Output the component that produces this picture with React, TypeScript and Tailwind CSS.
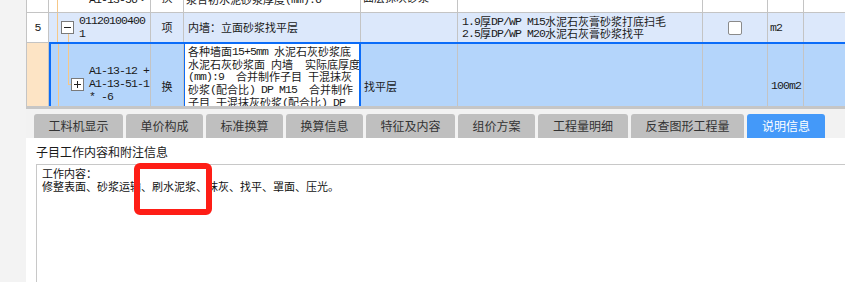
import React from 'react';

// ascii runs get a narrow mono face so they sit at about half the CJK width, like SimSun
const M: React.FC<{ t: string }> = ({ t }) => (
  <>
    {t.split(/([\x20-\x7e]+)/).map((s, i) =>
      /^[\x20-\x7e]+$/.test(s) ? (
        <span key={i} className="font-['Liberation_Mono',monospace] text-[11.5px] tracking-[-0.9px] leading-none">
          {s}
        </span>
      ) : (
        <span key={i} className="leading-none">{s}</span>
      )
    )}
  </>
);

const tabs = [
  { label: '工料机显示', w: 'w-[89px]' },
  { label: '单价构成', w: 'w-[77px]' },
  { label: '标准换算', w: 'w-[77px]' },
  { label: '换算信息', w: 'w-[77px]' },
  { label: '特征及内容', w: 'w-[89px]' },
  { label: '组价方案', w: 'w-[77px]' },
  { label: '工程量明细', w: 'w-[90px]' },
  { label: '反查图形工程量', w: 'w-[113px]' },
  { label: '说明信息', w: 'w-[78px]', active: true },
];

const activeLines = [
  '各种墙面15+5mm 水泥石灰砂浆底',
  '水泥石灰砂浆面 内墙  实际底厚度',
  '(mm):9  合并制作子目 干混抹灰',
  '砂浆(配合比) DP M15  合并制作',
  '子目 干混抹灰砂浆(配合比) DP',
  'M20',
];

const cell = 'shrink-0 border-r border-[#c4c4c4]';
const line = 'h-[13px] flex items-center whitespace-pre';

const App: React.FC = () => {
  return (
    <div className="relative w-[845px] h-[282px] overflow-hidden flex bg-white font-['Noto_Sans_CJK_SC',sans-serif] text-[11px] text-[#1a1a1a]">
      <div className="w-[26px] shrink-0 bg-[#f3f3f3]" />

      <div className="flex-1 flex flex-col min-w-0">
        {/* grid */}
        <div className="h-[106px] overflow-hidden border-l border-[#c4c4c4] flex flex-col">
          {/* partial row above */}
          <div className="h-[13px] shrink-0 flex border-b border-[#c4c4c4] bg-white">
            <div className={`${cell} w-[22px]`} />
            <div className={`${cell} w-[102px] relative flex items-end pb-[6px] pl-[40px] overflow-hidden`}>
              <div className="absolute left-[8px] top-0 bottom-0 w-px bg-[#f6c888]" />
              <div className={line}><M t="A1-13-56···" /></div>
            </div>
            <div className={`${cell} w-[33px] flex items-end justify-center pb-[8px] overflow-hidden`}>
              <div className={line}>换</div>
            </div>
            <div className={`${cell} w-[177px] flex items-end pb-[6px] pl-[2px] overflow-hidden`}>
              <div className={line}><M t="浆合初水泥砂浆厚度(mm):6" /></div>
            </div>
            <div className={`${cell} w-[97px] flex items-end pb-[8px] pl-[2px] overflow-hidden`}>
              <div className={line}>面层抹灰砂浆</div>
            </div>
            <div className={`${cell} w-[245px]`} />
            <div className={`${cell} w-[65px]`} />
            <div className={`${cell} w-[36px]`} />
            <div className="flex-1" />
          </div>

          {/* row 5 */}
          <div className="h-[29px] shrink-0 flex">
            <div className={`${cell} w-[22px] bg-white flex items-center justify-center`}>
              <M t="5" />
            </div>
            <div className="flex-1 flex bg-[#dce8fb]">
              <div className={`${cell} w-[102px] relative pl-[30px] pt-[1px] overflow-hidden`}>
                <div className="absolute left-[8px] top-0 bottom-0 w-px bg-[#f6c888]" />
                <div className="absolute left-[19px] top-[21px] bottom-0 w-px bg-[#f6c888]" />
                <div className="absolute left-[12px] top-[8px] w-[13px] h-[13px] border border-[#7a7a7a] bg-white flex items-center justify-center">
                  <div className="w-[7px] h-px bg-[#222]" />
                </div>
                <div className={line}><M t="01120100400" /></div>
                <div className={line}><M t="1" /></div>
              </div>
              <div className={`${cell} w-[33px] flex items-center justify-center`}>项</div>
              <div className={`${cell} w-[177px] flex items-center pl-[4px] whitespace-nowrap`}>内墙：立面砂浆找平层</div>
              <div className={`${cell} w-[97px]`} />
              <div className={`${cell} w-[245px] flex flex-col justify-center pl-[4px] overflow-hidden`}>
                <div className="h-[12px] flex items-center whitespace-pre"><M t="1.9厚DP/WP M15水泥石灰膏砂浆打底扫毛" /></div>
                <div className="h-[12px] flex items-center whitespace-pre"><M t="2.5厚DP/WP M20水泥石灰膏砂浆找平" /></div>
              </div>
              <div className={`${cell} w-[65px] flex items-center justify-center`}>
                <div className="w-[14px] h-[14px] rounded-[2px] border border-[#8a8a8a] bg-white" />
              </div>
              <div className={`${cell} w-[36px] flex items-center pl-[2px]`}>
                <M t="m2" />
              </div>
              <div className="flex-1" />
            </div>
          </div>

          {/* selected row */}
          <div className="h-[82px] shrink-0 flex">
            <div className={`${cell} w-[22px] bg-[#fde4c5] border-t border-t-[#c4c4c4]`} />
            <div className="flex-1 flex border-t-2 border-l-2 border-[#0b6cf8] bg-[#b4d5fb]">
              <div className={`${cell} w-[100px] relative pl-[38px] pt-[20px] overflow-hidden`}>
                <div className="absolute left-[7px] top-0 bottom-0 w-px bg-[#f6c888]" />
                <div className="absolute left-[17px] top-0 h-[41px] w-px bg-[#f6c888]" />
                <div className="absolute left-[17px] top-[40px] w-[4px] h-px bg-[#f6c888]" />
                <div className="absolute left-[20px] top-[34px] w-[13px] h-[13px] border border-[#7a7a7a] bg-white flex items-center justify-center">
                  <div className="w-[7px] h-px bg-[#222]" />
                  <div className="absolute w-px h-[7px] bg-[#222]" />
                </div>
                <div className={line}><M t="A1-13-12 +" /></div>
                <div className={line}><M t="A1-13-51-1" /></div>
                <div className={line}><M t="* -6" /></div>
              </div>
              <div className={`${cell} w-[33px] flex items-center justify-center pt-[4px]`}>换</div>
              <div className="shrink-0 w-[177px] bg-white border-l border-r-2 border-[#0b6cf8] pl-[3px] pt-[1px] overflow-hidden">
                {activeLines.map((l, i) => (
                  <div key={i} className="h-[12.75px] flex items-center whitespace-pre"><M t={l} /></div>
                ))}
              </div>
              <div className={`${cell} w-[97px] flex items-center pl-[3px] pt-[4px]`}>找平层</div>
              <div className={`${cell} w-[245px]`} />
              <div className={`${cell} w-[65px]`} />
              <div className={`${cell} w-[36px] flex items-center pl-[3px] pt-[4px]`}>
                <M t="100m2" />
              </div>
              <div className="flex-1" />
            </div>
          </div>
        </div>

        <div className="h-[3px] shrink-0 bg-[#c6c6c6]" />

        {/* tabs */}
        <div className="h-[29px] shrink-0 bg-[#f2f2f2] flex items-end gap-[3px] pl-[8px]">
          {tabs.map((t) => (
            <div
              key={t.label}
              className={`${t.w} h-[24px] shrink-0 rounded-t-[3px] flex items-center justify-center text-[12px] ${
                t.active ? 'bg-[#4499f9] text-white' : 'bg-[#bfbfbf] text-[#333]'
              }`}
            >
              {t.label}
            </div>
          ))}
        </div>

        {/* description */}
        <div className="flex-1 bg-white flex flex-col">
          <div className="pl-[10px] pt-[6px] leading-[16px] text-[12px] text-[#1a1a1a]">子目工作内容和附注信息</div>
          <div className="flex-1 ml-[10px] mt-[4px] border-l border-t border-[#c8c8c8] pl-[5px] pt-[2px] text-[11px] text-[#111]">
            <div className="leading-[13px]">工作内容：</div>
            <div className="leading-[13px] whitespace-nowrap">修整表面、砂浆运输、刷水泥浆、抹灰、找平、罩面、压光。</div>
          </div>
        </div>
      </div>

      {/* red annotation box */}
      <div className="absolute left-[134px] top-[163px] w-[78px] h-[52px] rounded-[6px] border-[6px] border-[#fe1e16]" />
    </div>
  );
};

export default App;
